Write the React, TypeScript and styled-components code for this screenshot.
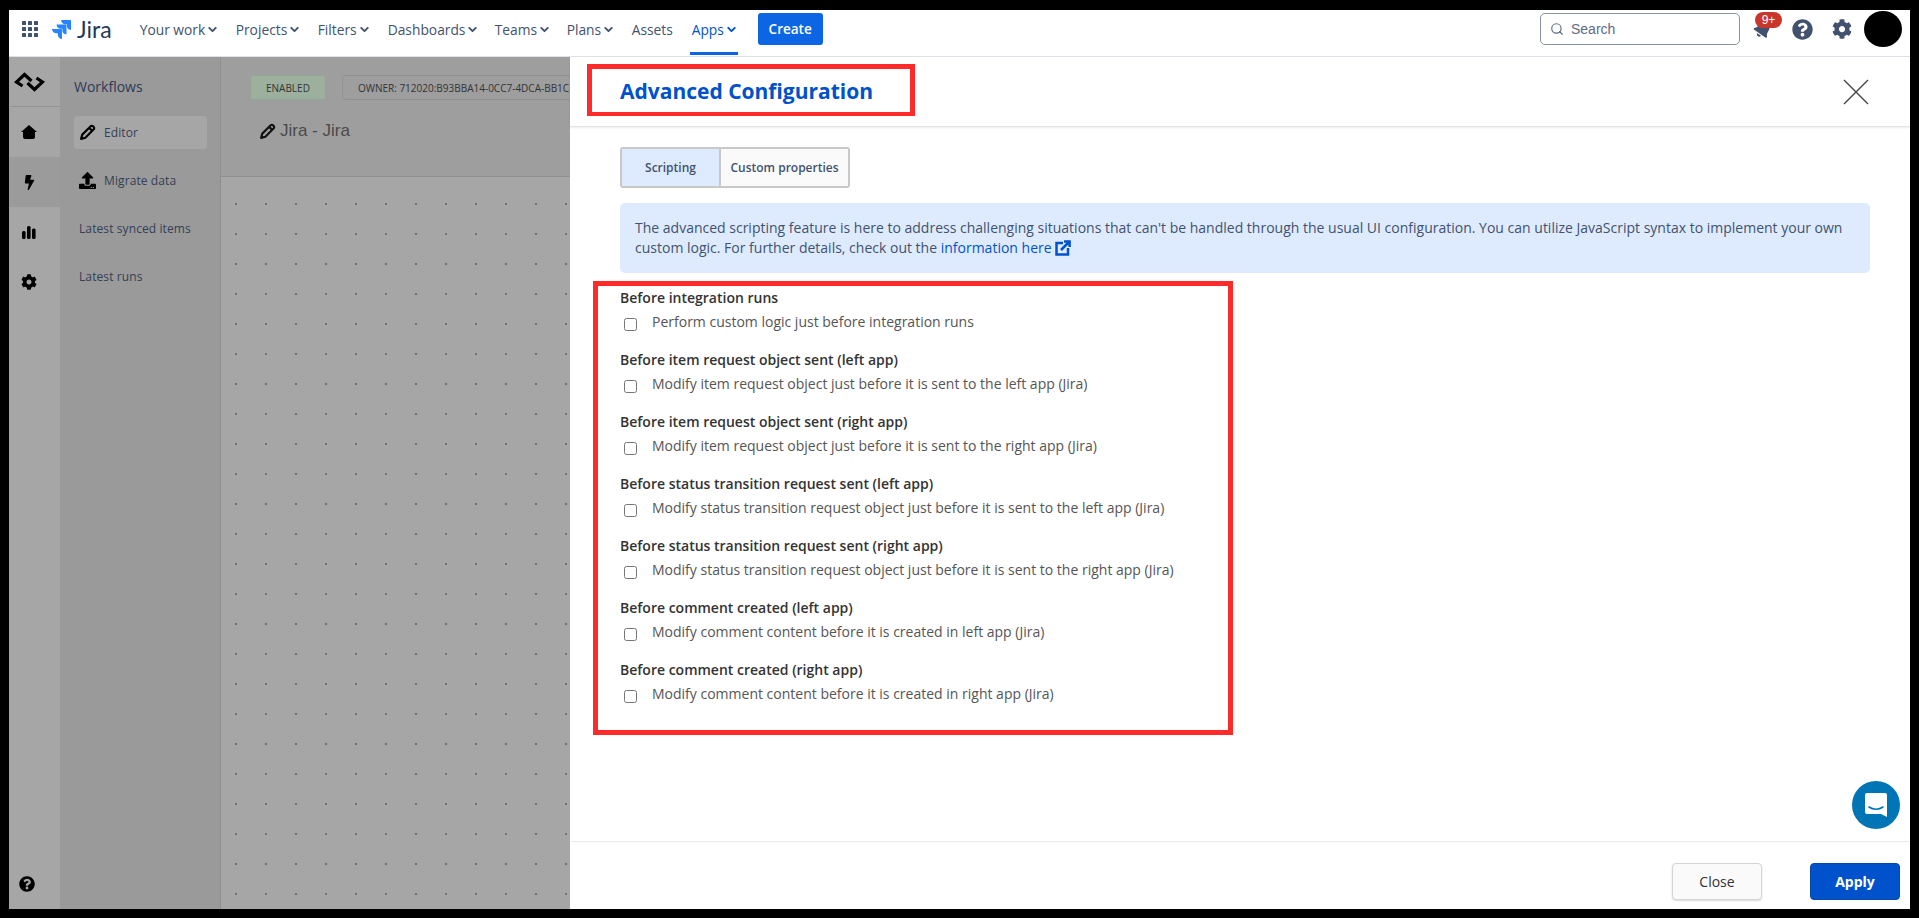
import React from "react";
import styled, { createGlobalStyle } from "styled-components";
import { FaBell, FaBolt, FaCog, FaQuestionCircle, FaUpload } from "react-icons/fa";
import { SiJira } from "react-icons/si";
import { ChevronDown, Search } from "lucide-react";

const GlobalStyle = createGlobalStyle`
  html, body, #root { margin: 0; height: 100%; }
  body { font-family: "Open Sans", "Noto Sans", sans-serif; background: #000; overflow: hidden; }
  * { box-sizing: border-box; }
`;

const Page = styled.div`
  height: 918px;
  padding: 10px 9px 9px;
  background: #000;
  display: flex;
  flex-direction: column;
`;

const TopBar = styled.header`
  height: 47px;
  flex: none;
  display: flex;
  align-items: center;
  background: #fff;
  border-bottom: 1px solid #dfe1e6;
  padding: 0 8px 8px 13px;
`;

const GridIcon = styled.svg`
  width: 16px;
  height: 16px;
  fill: #42526e;
  flex: none;
`;

const Brand = styled.div`
  display: flex;
  align-items: center;
  gap: 6px;
  margin: 0 28px 0 14px;
  color: #2684ff;
`;

const BrandName = styled.span`
  font-family: Lato, sans-serif;
  font-size: 23px;
  line-height: 1;
  color: #253858;
`;

const NavList = styled.nav`
  display: flex;
  align-items: center;
  height: 32px;
`;

const NavItem = styled.a<{ $active?: boolean; $w: number }>`
  position: relative;
  display: flex;
  align-items: center;
  gap: 1px;
  height: 100%;
  width: ${(p) => p.$w}px;
  font-size: 13.8px;
  font-weight: 500;
  color: ${(p) => (p.$active ? "#0052cc" : "#42526e")};
  &::after {
    content: "";
    display: ${(p) => (p.$active ? "block" : "none")};
    position: absolute;
    left: -2px;
    bottom: -10px;
    width: 48px;
    height: 3px;
    background: #0c66e4;
  }
`;

const CreateButton = styled.button`
  width: 65px;
  height: 32px;
  border: 0;
  border-radius: 3px;
  background: #0c66e4;
  color: #fff;
  font: 600 13.5px "Open Sans", sans-serif;
`;

const RightTools = styled.div`
  margin-left: auto;
  display: flex;
  align-items: center;
  height: 100%;
`;

const SearchBox = styled.div`
  width: 200px;
  height: 32px;
  display: flex;
  align-items: center;
  gap: 7px;
  padding-left: 9px;
  border: 1px solid #8993a4;
  border-radius: 5px;
  color: #5e6c84;
  font: 14px "Liberation Sans", Arial, sans-serif;
`;

const BellWrap = styled.div`
  position: relative;
  width: 18px;
  height: 20px;
  margin-left: 14px;
  margin-top: 2px;
  color: #42526e;
  svg { transform: rotate(35deg); }
`;

const Badge = styled.span`
  position: absolute;
  left: 1px;
  top: -8px;
  width: 27px;
  height: 16px;
  border-radius: 8px;
  background: #c9372c;
  color: #fff;
  font: 12px/16px "Liberation Sans", Arial, sans-serif;
  text-align: center;
`;

const ToolIcon = styled.span<{ $ml: number }>`
  display: flex;
  margin-left: ${(p) => p.$ml}px;
  color: #42526e;
`;

const Avatar = styled.div`
  width: 38px;
  height: 36px;
  margin-left: 12px;
  border-radius: 50%;
  background: #000;
`;

const Body = styled.div`
  flex: 1;
  min-height: 0;
  display: flex;
`;

const Rail = styled.aside`
  width: 51px;
  flex: none;
  display: flex;
  flex-direction: column;
  background: #a6a6a6;
  color: #000;
`;

const RailItem = styled.div<{ $active?: boolean; $line?: boolean }>`
  height: 50px;
  flex: none;
  display: flex;
  align-items: center;
  justify-content: center;
  padding-right: 11px;
  background: ${(p) => (p.$active ? "#9b9b9b" : "transparent")};
  border-bottom: ${(p) => (p.$line ? "1px solid #949494" : "0")};
`;

const RailHelp = styled.div`
  margin-top: auto;
  padding: 0 0 17px 10px;
  display: flex;
`;

const Sidebar = styled.aside`
  width: 161px;
  flex: none;
  background: #9a9a9a;
  border-right: 1px solid #8f8f8f;
  padding: 19px 13px 0 14px;
`;

const SidebarTitle = styled.div`
  font-size: 14px;
  line-height: 22px;
  color: #172b4d;
  opacity: 0.85;
  margin-bottom: 18px;
`;

const SideItem = styled.div<{ $active?: boolean }>`
  height: 33px;
  margin-bottom: 15px;
  display: flex;
  align-items: center;
  gap: 8px;
  padding-left: 5px;
  border-radius: 3px;
  background: ${(p) => (p.$active ? "#a6a6a6" : "transparent")};
  font-size: 12px;
  letter-spacing: 0.1px;
  color: #333f55;
  svg { flex: none; color: #000; }
`;

const Workspace = styled.main`
  width: 349px;
  flex: none;
  display: flex;
  flex-direction: column;
  overflow: hidden;
  background-color: #a6a6a6;
`;

const WorkspaceHead = styled.div`
  height: 120px;
  flex: none;
  padding: 18px 0 0 29px;
  background: #9e9e9e;
  border-bottom: 1px solid #8f8f8f;
`;

const Chips = styled.div`
  display: flex;
  gap: 16px;
  white-space: nowrap;
`;

const Chip = styled.span<{ $green?: boolean }>`
  height: 25px;
  flex: none;
  display: flex;
  align-items: center;
  padding: 0 15px;
  border: 1px solid ${(p) => (p.$green ? "#92a592" : "#929292")};
  border-radius: 3px;
  background: ${(p) => (p.$green ? "#9db09e" : "transparent")};
  font: 10px "Open Sans", sans-serif;
  color: #333;
`;

const ProjectName = styled.div`
  display: flex;
  align-items: center;
  gap: 4px;
  margin: 21px 0 0 9px;
  font: 17px "Liberation Sans", Arial, sans-serif;
  color: #4a4a4a;
  svg { color: #111; }
`;

const Canvas = styled.div`
  flex: 1;
  background-image: radial-gradient(circle, #6f6f6f 1px, transparent 1.2px);
  background-size: 30px 30px;
  background-position: 0px 12px;
`;

const Drawer = styled.section`
  position: relative;
  flex: 1;
  min-width: 0;
  display: flex;
  flex-direction: column;
  background: #fff;
`;

const DrawerHead = styled.div`
  height: 70px;
  flex: none;
  display: flex;
  align-items: flex-start;
  justify-content: space-between;
  padding: 7px 41px 0 17px;
  border-bottom: 1px solid #e3e3e3;
  box-shadow: 0 1px 2px rgba(0, 0, 0, 0.08);
`;

const TitleMark = styled.div`
  width: 328px;
  height: 52px;
  display: flex;
  align-items: center;
  padding-left: 28px;
  border: 5px solid #ff2a2a;
  border-bottom-width: 4px;
`;

const Title = styled.h1`
  margin: 0;
  font-size: 21px;
  font-weight: 700;
  color: #0052cc;
`;

const CloseIcon = styled.svg`
  width: 26px;
  height: 26px;
  margin-top: 15px;
  stroke: #444;
  stroke-width: 1.4;
`;

const DrawerBody = styled.div`
  flex: 1;
  min-height: 0;
  padding: 20px 40px 0 50px;
`;

const Tabs = styled.div`
  display: inline-flex;
  height: 41px;
  border: 2px solid #c8c8c8;
  border-radius: 3px;
`;

const Tab = styled.div<{ $active?: boolean; $w: number }>`
  width: ${(p) => p.$w}px;
  display: flex;
  align-items: center;
  justify-content: center;
  background: ${(p) => (p.$active ? "#deebff" : "#fafafa")};
  border-right: ${(p) => (p.$active ? "2px solid #c8c8c8" : "0")};
  font-size: 12px;
  font-weight: 600;
  color: #42526e;
`;

const Notice = styled.div`
  margin-top: 15px;
  height: 70px;
  padding: 15px;
  border-radius: 5px;
  background: #deebff;
  font-size: 14px;
  line-height: 20px;
  color: #42526e;
`;

const NoticeLink = styled.a`
  color: #0052cc;
  svg { vertical-align: -3px; margin-left: 3px; }
`;

const FormMark = styled.div`
  width: 640px;
  height: 454px;
  margin: 8px 0 0 -27px;
  padding: 2px 0 0 22px;
  border: 5px solid #ff2a2a;
`;

const Group = styled.div`
  height: 62px;
`;

const GroupTitle = styled.div`
  font-size: 14px;
  font-weight: 600;
  line-height: 20px;
  color: #333;
`;

const CheckRow = styled.label`
  display: flex;
  align-items: flex-start;
  gap: 15px;
  margin: 4px 0 0 4px;
  font-size: 14px;
  line-height: 20px;
  color: #555;
  input {
    width: 13px;
    height: 13px;
    margin: 6px 0 0;
    flex: none;
  }
`;

const DrawerFoot = styled.div`
  height: 68px;
  flex: none;
  display: flex;
  justify-content: flex-end;
  gap: 48px;
  padding: 21px 10px 0 0;
  border-top: 1px solid #ebebeb;
`;

const FootButton = styled.button<{ $primary?: boolean }>`
  width: 90px;
  height: 37px;
  border-radius: 4px;
  border: 1px solid ${(p) => (p.$primary ? "#0747a6" : "#d5d5d5")};
  background: ${(p) => (p.$primary ? "#0052cc" : "#fafafa")};
  color: ${(p) => (p.$primary ? "#fff" : "#333")};
  font: ${(p) => (p.$primary ? 700 : 400)} 14px "Open Sans", sans-serif;
  box-shadow: ${(p) => (p.$primary ? "none" : "0 1px 2px rgba(0,0,0,.15)")};
`;

const ChatBubble = styled.div`
  position: absolute;
  right: 10px;
  bottom: 80px;
  width: 48px;
  height: 48px;
  display: flex;
  align-items: center;
  justify-content: center;
  border-radius: 50%;
  background: #0075b5;
`;

const navItems = [
  { label: "Your work", w: 96, caret: true },
  { label: "Projects", w: 82, caret: true },
  { label: "Filters", w: 70, caret: true },
  { label: "Dashboards", w: 107, caret: true },
  { label: "Teams", w: 72, caret: true },
  { label: "Plans", w: 65, caret: true },
  { label: "Assets", w: 60, caret: false },
  { label: "Apps", w: 66, caret: true, active: true },
];

const hooks = [
  ["Before integration runs", "Perform custom logic just before integration runs"],
  ["Before item request object sent (left app)", "Modify item request object just before it is sent to the left app (Jira)"],
  ["Before item request object sent (right app)", "Modify item request object just before it is sent to the right app (Jira)"],
  ["Before status transition request sent (left app)", "Modify status transition request object just before it is sent to the left app (Jira)"],
  ["Before status transition request sent (right app)", "Modify status transition request object just before it is sent to the right app (Jira)"],
  ["Before comment created (left app)", "Modify comment content before it is created in left app (Jira)"],
  ["Before comment created (right app)", "Modify comment content before it is created in right app (Jira)"],
];

const PencilIcon = ({ size }: { size: number }) => (
  <svg width={size} height={size} viewBox="0 0 24 24" fill="none" stroke="currentColor" strokeWidth="3" strokeLinejoin="round">
    <path d="M3 21l1.6-6L16.5 3.2a2.4 2.4 0 0 1 3.4 0l.9.9a2.4 2.4 0 0 1 0 3.4L9 19.4z" />
    <path d="M14.5 5.5l4 4" />
  </svg>
);

const LogoIcon = () => (
  <svg width="31" height="20" viewBox="0 0 30 20" fill="none" stroke="#000" strokeWidth="3.2">
    <path d="M8 14L2 10l8-7.5L17 9" />
    <path d="M22 6l6 4-8 7.5L13 11" />
  </svg>
);

const HomeIcon = () => (
  <svg width="16" height="14" viewBox="0 0 16 14" fill="#000">
    <path d="M8 0L0 7h2v5a2 2 0 0 0 2 2h8a2 2 0 0 0 2-2V7h2z" />
  </svg>
);

const BarsIcon = () => (
  <svg width="14" height="13" viewBox="0 0 14 13" fill="#000">
    <rect x="0" y="5" width="3.6" height="8" rx="1.5" />
    <rect x="5" y="0" width="3.6" height="13" rx="1.5" />
    <rect x="10" y="2.5" width="3.6" height="10.5" rx="1.5" />
  </svg>
);

const ExternalIcon = () => (
  <svg width="16" height="16" viewBox="0 0 16 16" fill="none" stroke="#0052cc" strokeWidth="2.5">
    <path d="M8 3H1.5v11.5H13V8" />
    <path d="M6 10l8-8M9 1.4h5.6V7" />
  </svg>
);

export default function App() {
  return (
    <Page>
      <GlobalStyle />
      <TopBar>
        <GridIcon viewBox="0 0 16 16">
          {[0, 6, 12].map((y) =>
            [0, 6, 12].map((x) => <rect key={`${x}-${y}`} x={x} y={y} width="4" height="4" rx="0.6" />)
          )}
        </GridIcon>
        <Brand>
          <SiJira size={19} />
          <BrandName>Jira</BrandName>
        </Brand>
        <NavList>
          {navItems.map((item) => (
            <NavItem key={item.label} $active={item.active} $w={item.w}>
              {item.label}
              {item.caret && <ChevronDown size={13} strokeWidth={3.5} />}
            </NavItem>
          ))}
        </NavList>
        <CreateButton>Create</CreateButton>
        <RightTools>
          <SearchBox>
            <Search size={14} />
            Search
          </SearchBox>
          <BellWrap>
            <FaBell size={18} />
            <Badge>9+</Badge>
          </BellWrap>
          <ToolIcon $ml={20}>
            <FaQuestionCircle size={21} />
          </ToolIcon>
          <ToolIcon $ml={19}>
            <FaCog size={20} />
          </ToolIcon>
          <Avatar />
        </RightTools>
      </TopBar>
      <Body>
        <Rail>
          <RailItem $line>
            <LogoIcon />
          </RailItem>
          <RailItem>
            <HomeIcon />
          </RailItem>
          <RailItem $active>
            <FaBolt size={15} />
          </RailItem>
          <RailItem>
            <BarsIcon />
          </RailItem>
          <RailItem>
            <FaCog size={16} />
          </RailItem>
          <RailHelp>
            <FaQuestionCircle size={16} />
          </RailHelp>
        </Rail>
        <Sidebar>
          <SidebarTitle>Workflows</SidebarTitle>
          <SideItem $active>
            <PencilIcon size={17} />
            Editor
          </SideItem>
          <SideItem>
            <FaUpload size={17} />
            Migrate data
          </SideItem>
          <SideItem>Latest synced items</SideItem>
          <SideItem>Latest runs</SideItem>
        </Sidebar>
        <Workspace>
          <WorkspaceHead>
            <Chips>
              <Chip $green>ENABLED</Chip>
              <Chip>OWNER: 712020:B93BBA14-0CC7-4DCA-BB1C-7A20D8E5F0B3</Chip>
            </Chips>
            <ProjectName>
              <PencilIcon size={17} />
              Jira - Jira
            </ProjectName>
          </WorkspaceHead>
          <Canvas />
        </Workspace>
        <Drawer>
          <DrawerHead>
            <TitleMark>
              <Title>Advanced Configuration</Title>
            </TitleMark>
            <CloseIcon viewBox="0 0 26 26">
              <path d="M1 1l24 24M25 1L1 25" />
            </CloseIcon>
          </DrawerHead>
          <DrawerBody>
            <Tabs>
              <Tab $active $w={99}>Scripting</Tab>
              <Tab $w={127}>Custom properties</Tab>
            </Tabs>
            <Notice>
              The advanced scripting feature is here to address challenging situations that can't be handled through the usual UI configuration. You can utilize JavaScript syntax to implement your own custom logic. For further details, check out the{" "}
              <NoticeLink>
                information here
                <ExternalIcon />
              </NoticeLink>
            </Notice>
            <FormMark>
              {hooks.map(([title, label]) => (
                <Group key={title}>
                  <GroupTitle>{title}</GroupTitle>
                  <CheckRow>
                    <input type="checkbox" />
                    {label}
                  </CheckRow>
                </Group>
              ))}
            </FormMark>
          </DrawerBody>
          <DrawerFoot>
            <FootButton>Close</FootButton>
            <FootButton $primary>Apply</FootButton>
          </DrawerFoot>
          <ChatBubble>
            <svg width="24" height="26" viewBox="0 0 24 26">
              <path d="M3 1h18a2 2 0 0 1 2 2v22l-6-3H3a2 2 0 0 1-2-2V3a2 2 0 0 1 2-2z" fill="#fff" />
              <path d="M5 15c4 3 10 3 14 0" fill="none" stroke="#0075b5" strokeWidth="1.6" strokeLinecap="round" />
            </svg>
          </ChatBubble>
        </Drawer>
      </Body>
    </Page>
  );
}
